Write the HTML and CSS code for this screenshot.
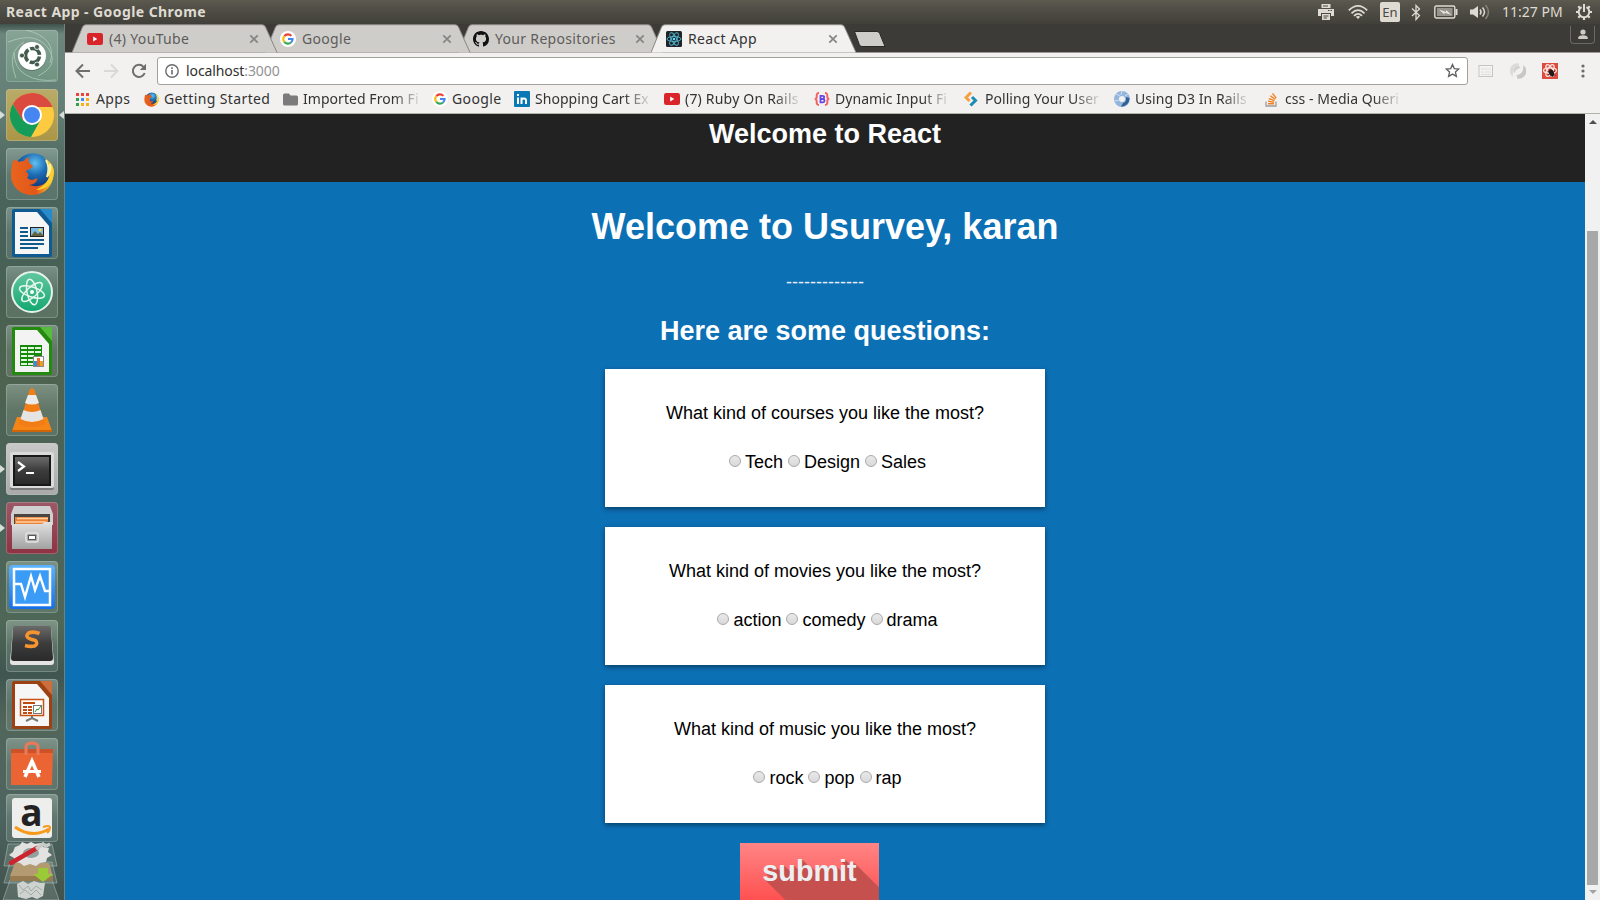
FILE: index.html
```html
<!DOCTYPE html>
<html lang="en">
<head>
<meta charset="utf-8">
<title>React App</title>
<link rel="stylesheet" href="styles.css">
</head>
<body>
<svg class="defs" width="0" height="0">
  <defs>
    <linearGradient id="gVbox" x1="0" y1="0" x2="0" y2="1"><stop offset="0" stop-color="#5ab4ff"/><stop offset="1" stop-color="#1470e8"/></linearGradient>
    <linearGradient id="gDark" x1="0" y1="0" x2="0" y2="1"><stop offset="0" stop-color="#6a6a6a"/><stop offset=".5" stop-color="#3c3c3c"/><stop offset="1" stop-color="#2a2a2a"/></linearGradient>
    <linearGradient id="gGrey" x1="0" y1="0" x2="0" y2="1"><stop offset="0" stop-color="#e2e2e2"/><stop offset="1" stop-color="#a2a2a2"/></linearGradient>
    <linearGradient id="gAtom" x1="0" y1="0" x2="0" y2="1"><stop offset="0" stop-color="#63c79f"/><stop offset="1" stop-color="#12a770"/></linearGradient>
    <radialGradient id="gFox" cx=".55" cy=".25" r=".6"><stop offset="0" stop-color="#5fc0ef"/><stop offset=".5" stop-color="#1c6db5"/><stop offset="1" stop-color="#133a7c"/></radialGradient>
    <linearGradient id="gFlame" x1="0" y1="0" x2="1" y2="0"><stop offset="0" stop-color="#e8641c"/><stop offset=".6" stop-color="#e2571a"/><stop offset="1" stop-color="#ffd62e"/></linearGradient>
    <symbol id="google" viewBox="0 0 16 16"><circle cx="8" cy="8" r="8" fill="#fff"/><g fill="none" stroke-width="2.1"><path d="M4.3 5.2A4.6 4.6 0 0 1 11.4 4.9" stroke="#ea4335"/><path d="M4.3 5.2A4.6 4.6 0 0 0 4.3 10.8" stroke="#fbbc05"/><path d="M4.3 10.8A4.6 4.6 0 0 0 11 11.5" stroke="#34a853"/><path d="M8 8h4.6A4.6 4.6 0 0 1 11 11.5" stroke="#4285f4"/></g></symbol>
    <symbol id="youtube" viewBox="0 0 16 16"><rect y="2" width="16" height="12" rx="2.2" fill="#d9252a"/><path d="M6.2 5.6v4.8L10.3 8z" fill="#fff"/></symbol>
    <symbol id="firefox" viewBox="0 0 44 44"><circle cx="23" cy="21" r="19.500" fill="url(#gFox)"/><path d="M3 9C5 7 7 8 9 10q2-1 5-1c2-3 4-4 5-4-1 4 0 6 4 9 0 3-7 3-7 6 3 1 3 4 1 6 4 3 7 2 10 0 1 4-4 7-8 7 9 3 19 0 20-9 1-6 0-11-3-15 6 5 8 12 7 17-2 11-11 17-21 17C10 43 1 34 1 23 1 17 2 13 3 9z" fill="url(#gFlame)"/><path d="M33 5c8 6 9 14 6 21-3 6-7 9-13 12 11 0 18-8 18-18 0-6-4-11-11-15z" fill="#ffcf2b"/><path d="M36 8c3 5 3 11 1 17 3-4 4-9 3-13" stroke="#fff29c" fill="none" stroke-width="2"/></symbol>
    <symbol id="cross" viewBox="0 0 10 10"><path d="M1.300 1.300l7.400 7.400M8.700 1.300L1.300 8.700" stroke="#858585" stroke-width="1.700"/></symbol>
    <symbol id="tabShape" viewBox="0 0 206 29"><path d="M0 28.500L10.500 3Q11.500 .7 14 .7H190Q192.500 .7 193.500 3L205 28.500" fill="currentColor" stroke="#8a8781" stroke-width="1"/></symbol>
  </defs>
</svg>

<header class="panel">
  <span class="panel-title">React App - Google Chrome</span>
  <div class="indicators">
    <svg class="i-print" width="16" height="16" viewBox="0 0 16 16"><path d="M3.500 0h9v4h-9zM0 5h16v7h-3V9H3v3H0z" fill="#dfdbd2"/><path d="M4 10h8v6H4z" fill="#dfdbd2"/><path d="M5 2h5M5.500 12h5M5.500 14h3.500" stroke="#4b4943"/><path d="M10 6.500h4" stroke="#4b4943" stroke-dasharray="1.500 1"/></svg>
    <svg class="i-wifi" width="20" height="16" viewBox="0 0 20 16"><g fill="none" stroke="#dfdbd2" stroke-width="1.800"><path d="M.8 6.300Q10-2.500 19.200 6.300"/><path d="M3.500 9.300Q10 3 16.500 9.300"/><path d="M6 11.800Q10 7.800 14 11.800"/></g><path d="M7.800 12.800Q10 11 12.200 12.800L10 15z" fill="#dfdbd2"/></svg>
    <span class="lang">En</span>
    <svg class="i-bt" width="10" height="17" viewBox="0 0 10 17"><path d="M1 4.500l7.500 7L5 15.500V1.500l3.500 3.500L1 12" fill="none" stroke="#dfdbd2" stroke-width="1.300"/></svg>
    <svg class="i-bat" width="24" height="14" viewBox="0 0 24 14"><rect x=".8" y="1" width="20" height="12" rx="1.500" fill="none" stroke="#dfdbd2" stroke-width="1.400"/><rect x="3" y="3" width="15.500" height="8" fill="#96938c"/><path d="M22.500 4v6" stroke="#dfdbd2" stroke-width="2"/><path d="M5 4.500l7 2.500V5l5.500 5-7-2.500v2z" fill="#eeeae0"/></svg>
    <svg class="i-vol" width="20" height="16" viewBox="0 0 20 16"><path d="M0 5.500h3L8 2v12L3 10.500H0z" fill="#dfdbd2"/><g fill="none" stroke="#dfdbd2" stroke-width="1.500"><path d="M10 5.500q2 2.500 0 5"/><path d="M12.500 3.500q4 4.500 0 9"/><path d="M15.500 1q6 7 0 14" stroke="#85827a"/></g></svg>
    <span class="clock">11:27 PM</span>
    <svg class="i-gear" width="16" height="16" viewBox="0 0 16 16"><path d="M5.600 3.200A5.300 5.300 0 1 0 10.400 3.200" fill="none" stroke="#dfdbd2" stroke-width="2"/><path d="M8 0v8" stroke="#dfdbd2" stroke-width="2"/><path d="M0 8h2.500M13.500 8H16M8 13.500V16M2.300 2.300l1.900 1.900M13.700 2.300l-1.900 1.900M2.300 13.700l1.900-1.900M13.700 13.700l-1.900-1.900" stroke="#dfdbd2" stroke-width="2.200"/></svg>
  </div>
</header>

<div class="desktop">
  <nav class="launcher">
    <div class="tile ubuntu"><svg viewBox="0 0 52 52"><g fill="none" stroke="#c5d8cc" stroke-width="1" opacity=".6"><path d="M2 12Q30 1 42 18T32 46M50 50Q32 52 20 45T8 22"/><path d="M20 0Q52 8 44 33M10 48Q0 22 18 12"/></g><circle cx="26" cy="27" r="14" fill="#40564a" opacity=".5"/><circle cx="26" cy="26" r="14" fill="#fff"/><circle cx="26.500" cy="25.500" r="7" fill="none" stroke="#425b4c" stroke-width="3.600" stroke-dasharray="12.700 2" stroke-dashoffset="-1"/><g fill="#425b4c" stroke="#fff" stroke-width=".8"><circle cx="16" cy="25.500" r="2.500"/><circle cx="31" cy="17" r="2.500"/><circle cx="31" cy="34.500" r="2.500"/></g></svg></div>
    <div class="tile chrome running active"><svg viewBox="0 0 52 52"><circle cx="26" cy="26" r="22" fill="#fdca40"/><path d="M6.900 15A22 22 0 0 1 46.500 18H26L16.500 31.500z" fill="#db4a3e"/><path d="M6.900 15A22 22 0 0 0 25 48L34.500 31Q26 38 16.500 31z" fill="#149c58"/><circle cx="26" cy="26" r="10" fill="#fff"/><circle cx="26" cy="26" r="8" fill="#4586f2"/></svg></div>
    <div class="tile"><svg viewBox="0 0 52 52"><use href="#firefox" x="4" y="4" width="44" height="44"/></svg></div>
    <div class="tile"><svg viewBox="0 0 52 52"><rect x="6" y="2" width="40" height="48" rx="2" fill="#0e5a91"/><path d="M34 2h12v14z" fill="#2889cc"/><path d="M9 5h22l12 14v28H9z" fill="#f6f6f6"/><path d="M14 21h8M14 25h8M14 29h8M14 33h24M14 37h24M14 41h18" stroke="#12598c" stroke-width="2"/><rect x="24.500" y="20.500" width="13" height="9" fill="#79bde8" stroke="#222"/><path d="M25 29l4-5 3 3 2-2 4 4z" fill="#64643c"/><circle cx="34" cy="23" r="1.500" fill="#ffd943"/></svg></div>
    <div class="tile"><svg viewBox="0 0 52 52"><circle cx="26" cy="26" r="20" fill="url(#gAtom)" stroke="#e6f2ec" stroke-width="2"/><g fill="none" stroke="#e8f8f0" stroke-width="1.500"><ellipse cx="26" cy="26" rx="13" ry="5" transform="rotate(18 26 26)"/><ellipse cx="26" cy="26" rx="13" ry="5" transform="rotate(78 26 26)"/><ellipse cx="26" cy="26" rx="13" ry="5" transform="rotate(138 26 26)"/></g><circle cx="26" cy="26" r="2" fill="#fff"/></svg></div>
    <div class="tile"><svg viewBox="0 0 52 52"><rect x="6" y="2" width="40" height="48" rx="2" fill="#23890f"/><path d="M34 2h12v14z" fill="#55bc3c"/><path d="M9 5h22l12 14v28H9z" fill="#f3f3f3"/><rect x="14" y="20" width="22" height="21" fill="#16890b"/><path d="M15 22h6v2h-6zM22 22h6v2h-6zM29 22h6v2h-6zM15 26h6v2h-6zM22 26h6v2h-6zM29 26h6v2h-6zM15 30h6v2h-6zM22 30h6v2h-6zM15 34h6v2h-6zM22 34h5v2h-5zM15 38h6v2h-6zM22 38h5v2h-5z" fill="#e4f7e1"/><rect x="27.500" y="31.500" width="10" height="10" fill="#fff" stroke="#888"/><path d="M28 36h3v5h-3z" fill="#2c91d8"/><path d="M31 33h3v8h-3z" fill="#f06a22"/><path d="M34 36h3v5h-3z" fill="#e9a11b"/></svg></div>
    <div class="tile"><svg viewBox="0 0 52 52"><path d="M11 33h30l5 14H6z" fill="#f58616"/><path d="M6 46h40v2H6z" fill="#ce6509"/><path d="M15 35L23.500 6q2.500-4 5 0L37 35q4 4 0 6-11 4-22 0-4-2 0-6z" fill="#f27d16"/><path d="M22 11h8l3 8q-7 3-14 0z" fill="#ecebea"/><path d="M17.500 26q8.500 4 17 0l3 9q-11.500 6-23 0z" fill="#e6e4e3"/></svg></div>
    <div class="tile light running"><svg viewBox="0 0 52 52"><rect x="4" y="10" width="44" height="37" rx="2" fill="#7b7b7b"/><rect x="4" y="9" width="44" height="36" rx="2" fill="#dadada"/><rect x="7" y="12" width="38" height="31" fill="#181818"/><rect x="9" y="14" width="34" height="27" fill="url(#gDark)"/><path d="M12 19l6 4.500-6 4.500" fill="none" stroke="#fff" stroke-width="2.200"/><path d="M20 30h8" stroke="#fff" stroke-width="2"/></svg></div>
    <div class="tile red running"><svg viewBox="0 0 52 52"><path d="M8 4h36l3 8v11H5V12z" fill="#cfcfcf"/><path d="M8 12h36v11H8z" fill="#4b4541"/><path d="M9 15h33v8H9z" fill="#ec8238"/><path d="M11 16.500h31M10 20h30" stroke="#ffcf9e" stroke-width="1.500"/><path d="M6 22h30l3-2h7v27H6z" fill="url(#gGrey)"/><rect x="20" y="31" width="12" height="9" rx="2" fill="#aaa" stroke="#e5e5e5" stroke-width="1.500"/><rect x="22.500" y="33.500" width="7" height="4" fill="#fff" stroke="#555"/></svg></div>
    <div class="tile"><svg viewBox="0 0 52 52"><rect x="3" y="4" width="46" height="44" rx="4" fill="url(#gVbox)"/><rect x="8" y="8" width="36" height="36" fill="#3b9cf8" stroke="#fff" stroke-width="2.500"/><path d="M9 23h6l4 13 6-21 4 14 5-14 5 15h4" fill="none" stroke="#fff" stroke-width="2.400"/></svg></div>
    <div class="tile"><svg viewBox="0 0 52 52"><path d="M7 8L4 42q0 3 3 3h38q3 0 3-3L45 8z" fill="#e3e3e3"/><path d="M9 6h34q2 0 2 3l2 29q0 3-3 3H8q-3 0-3-3L7 9q0-3 2-3z" fill="url(#gDark)"/><path d="M33.500 13.500q-6-2.500-11-.5-4 4 2 6l5 1.500q3 3-1 5.500-4 1-9.500-.5" fill="none" stroke="#f69430" stroke-width="3.600"/></svg></div>
    <div class="tile"><svg viewBox="0 0 52 52"><rect x="6" y="2" width="40" height="48" rx="2" fill="#9c4113"/><path d="M34 2h12v14z" fill="#cc6d3b"/><path d="M9 5h22l12 14v28H9z" fill="#f6f6f6"/><rect x="14.500" y="20.500" width="23" height="16" fill="#fff" stroke="#c75115" stroke-width="1.500"/><path d="M17 24h12M17 28h4M22 28h4M17 31h4M22 31h4M17 34h4M22 34h4" stroke="#bd4b12" stroke-width="2"/><rect x="27.500" y="26.500" width="8" height="8" fill="#fff" stroke="#777"/><path d="M29 33l2-3 1 1 3-4" stroke="#2a9b29" fill="none"/><path d="M26 37v3M20 42l6-3 6 3" stroke="#777" stroke-width="2" fill="none"/></svg></div>
    <div class="tile"><svg viewBox="0 0 52 52"><path d="M5 11h42l-1 36H5z" fill="#eb6434"/><path d="M5 11h42v4H5z" fill="#cc522a"/><path d="M20 17V9q0-4 6-4t6 4v8" fill="none" stroke="#e87a5a" stroke-width="3"/><g fill="none" stroke="#fff" stroke-width="3.500"><path d="M19 39l7-16 7 16"/><path d="M17 33.500h18" stroke-width="3"/></g></svg></div>
    <div class="tile amazon"><svg viewBox="0 0 52 48"><rect x="6" y="4" width="40" height="40" rx="3" fill="#eeeeec"/></svg><span class="amazon-a">a</span><svg class="smile" viewBox="0 0 52 48"><path d="M9 33q17 12 34 2" fill="none" stroke="#f79a1c" stroke-width="3"/><path d="M37 33q6-2 7 0 0 4-3 6" fill="none" stroke="#f79a1c" stroke-width="2"/></svg></div>
    <svg class="stack" width="65" height="58" viewBox="0 0 65 58"><g fill="#b9ccc5" fill-opacity=".2" stroke="#c4d2cc" stroke-opacity=".45"><path d="M9 2h44l5 22H5z"/><path d="M11 20h42l5 21H5z"/><path d="M11 38h42l7 20H4z"/></g><path d="M16 21h34l4 13H11z" fill="#b39a71"/><path d="M11 34h43v5H11z" fill="#987a51"/><path d="M16 5l5-2 2-3 5 2 4-2 4 2 6-1 2 4 6 1-1 4 4 3-5 3-1 4-6 1-4 3-6-2-6 2-4-3-6-1v-4l-5-3 4-3z" fill="#e2e2e0"/><ellipse cx="32" cy="11" rx="8" ry="5" fill="#91a09b"/><path d="M12 21L38 6" stroke="#cc2530" stroke-width="4.500" stroke-linecap="round"/><path d="M37 7l7-5 3 2 4-2" stroke="#c9cbca" stroke-width="3.500" fill="none"/><path d="M39 26h10v6h5L44 40l-10-8h5z" fill="#9acb37"/><path d="M18 42l6-3 5 3 6-3 6 2h5l-2 13-6 3-5-2-6 2-8-2z" fill="#cfd3d0"/><path d="M20 43l4 5 5-4 3 5 5-5 6 4M21 52l5-4 6 5 5-5 5 5" stroke="#a3aba8" fill="none"/></svg>
  </nav>

  <main class="browser">
    <div class="tabs">
      <div class="tab"><svg class="tab-bg"><use href="#tabShape"/></svg><svg class="fav"><use href="#youtube"/></svg><span class="tab-text">(4) YouTube</span><svg class="close"><use href="#cross"/></svg></div>
      <div class="tab"><svg class="tab-bg"><use href="#tabShape"/></svg><svg class="fav"><use href="#google"/></svg><span class="tab-text">Google</span><svg class="close"><use href="#cross"/></svg></div>
      <div class="tab"><svg class="tab-bg"><use href="#tabShape"/></svg><svg class="fav" viewBox="0 0 16 16"><path d="M8 0C3.580 0 0 3.580 0 8c0 3.540 2.290 6.530 5.470 7.590.4.070.55-.17.55-.38 0-.19-.01-.82-.01-1.490-2.010.37-2.530-.49-2.690-.94-.09-.23-.48-.94-.82-1.130-.28-.15-.68-.52-.01-.53.63-.01 1.080.58 1.230.82.72 1.210 1.870.87 2.330.66.07-.52.28-.87.51-1.070-1.780-.2-3.640-.89-3.640-3.950 0-.87.31-1.590.82-2.150-.08-.2-.36-1.020.08-2.120 0 0 .67-.21 2.200.82.64-.18 1.320-.27 2-.27s1.360.09 2 .27c1.530-1.040 2.200-.82 2.200-.82.44 1.100.16 1.920.08 2.120.51.56.82 1.270.82 2.150 0 3.070-1.870 3.750-3.650 3.950.29.25.54.73.54 1.480 0 1.070-.01 1.930-.01 2.200 0 .21.15.46.55.38A8.010 8.010 0 0 0 16 8c0-4.420-3.580-8-8-8z" fill="#111"/></svg><span class="tab-text">Your Repositories</span><svg class="close"><use href="#cross"/></svg></div>
      <div class="tab current"><svg class="tab-bg"><use href="#tabShape"/></svg><svg class="fav" viewBox="0 0 16 16"><rect width="16" height="16" rx="1.500" fill="#202428"/><g fill="none" stroke="#4fb6d0" stroke-width=".9"><ellipse cx="8" cy="8" rx="7" ry="2.600"/><ellipse cx="8" cy="8" rx="7" ry="2.600" transform="rotate(60 8 8)"/><ellipse cx="8" cy="8" rx="7" ry="2.600" transform="rotate(120 8 8)"/></g><circle cx="8" cy="8" r="1.300" fill="#61dafb"/></svg><span class="tab-text">React App</span><svg class="close"><use href="#cross"/></svg></div>
      <svg class="newtab" width="34" height="17" viewBox="0 0 34 17"><path d="M2.500.5H25q2 0 2.700 2L33 15.500H10q-2 0-2.700-2z" fill="#cfcdca" stroke="#2b2925"/></svg>
      <div class="profile"><svg width="10" height="11" viewBox="0 0 10 11"><circle cx="5" cy="3" r="2.600" fill="#cfccc5"/><path d="M.3 10V8.300Q1 6.300 5 6.300t4.700 2V10z" fill="#cfccc5"/></svg></div>
    </div>

    <div class="toolbar">
      <svg class="nav-back" width="16" height="16" viewBox="0 0 16 16"><path d="M15 8H2M8 1.500L1.500 8 8 14.500" fill="none" stroke="#6e6e6e" stroke-width="2"/></svg>
      <svg class="nav-fwd" width="16" height="16" viewBox="0 0 16 16"><path d="M1 8h13M8 1.500L14.500 8 8 14.500" fill="none" stroke="#d9d8d6" stroke-width="2"/></svg>
      <svg class="nav-reload" width="16" height="16" viewBox="0 0 16 16"><path d="M13.700 10A6.100 6.100 0 1 1 12.500 3.800" fill="none" stroke="#6e6e6e" stroke-width="2"/><path d="M15 .8V7H8.800z" fill="#6e6e6e"/></svg>
      <div class="address">
        <svg width="14" height="14" viewBox="0 0 14 14"><circle cx="7" cy="7" r="6.200" fill="none" stroke="#6b6b6b" stroke-width="1.400"/><path d="M7 6v4.500M7 3.300v1.700" stroke="#6b6b6b" stroke-width="1.600"/></svg>
        <span class="url">localhost<span class="port">:3000</span></span>
        <svg class="star" width="15" height="15" viewBox="0 0 15 15"><path d="M7.500 1.500l1.800 4.100 4.500.4-3.400 3 1 4.400-3.900-2.300-3.900 2.300 1-4.400-3.400-3 4.500-.4z" fill="none" stroke="#5f5f5f" stroke-width="1.300"/></svg>
      </div>
      <svg class="ext1" width="16" height="14" viewBox="0 0 16 14"><rect x="1" y="1.500" width="13.500" height="11" fill="#f4f3f2" stroke="#c6c5c3"/><path d="M3 5h10M3 8h3M7 8h6M3 10.500h10" stroke="#dfdedc"/></svg>
      <svg class="ext2" width="16" height="16" viewBox="0 0 16 16"><path d="M9 .5A7.500 7.500 0 0 0 3 14Q1.500 5 10 3.500q-2-1-1-3z" fill="#dcdbda"/><path d="M8 3.500a4.500 4.500 0 0 0-3.500 7Q5 6 11 4.500z" fill="#cfcecd"/><path d="M7 15.500A7.500 7.500 0 0 0 13 2q1.500 9-7 10.500 2 1 1 3z" fill="#c8c7c6"/></svg>
      <svg class="ext3" width="16" height="16" viewBox="0 0 16 16"><rect width="16" height="16" fill="#dc4b3e"/><g fill="none" stroke="#fbe3df" stroke-width="1.200"><ellipse cx="8" cy="7.500" rx="6.500" ry="2.700"/><ellipse cx="8" cy="7.500" rx="6.500" ry="2.700" transform="rotate(60 8 7.500)"/><ellipse cx="8" cy="7.500" rx="6.500" ry="2.700" transform="rotate(120 8 7.500)"/></g><ellipse cx="9.500" cy="10" rx="2.500" ry="3.500" transform="rotate(-25 9.500 10)" fill="#241816"/><path d="M5.500 8.500l8 4M6 12l7-4M8 6l3 8" stroke="#241816" stroke-width=".8"/></svg>
      <svg class="menu" width="4" height="14" viewBox="0 0 4 14"><g fill="#6b6b6b"><circle cx="2" cy="2" r="1.600"/><circle cx="2" cy="7" r="1.600"/><circle cx="2" cy="12" r="1.600"/></g></svg>
    </div>

    <div class="bookmarks">
      <div class="bm b-apps"><svg width="13" height="13" viewBox="0 0 13 13"><path d="M0 0h3v3H0zM5 0h3v3H5zM10 0h3v3h-3z" fill="#e8453c"/><path d="M0 5h3v3H0zM0 10h3v3H0z" fill="#2f9e4f"/><path d="M5 5h3v3H5z" fill="#4688f1"/><path d="M10 5h3v3h-3zM5 10h3v3H5zM10 10h3v3h-3z" fill="#f6b01b"/></svg><span>Apps</span></div>
      <div class="bm b-ff"><svg width="15" height="15" viewBox="0 0 44 44"><use href="#firefox" width="44" height="44"/></svg><span>Getting Started</span></div>
      <div class="bm b-imp"><svg width="15" height="13" viewBox="0 0 15 13"><path d="M0 2Q0 .5 1.500.5H6L7.500 2.500H13.500Q15 2.500 15 4v7q0 1.500-1.500 1.500h-12Q0 12.500 0 11z" fill="#7b7b7b"/></svg><span class="fade">Imported From Fi</span></div>
      <div class="bm b-goo"><svg width="16" height="16"><use href="#google"/></svg><span>Google</span></div>
      <div class="bm b-li"><svg width="16" height="16" viewBox="0 0 16 16"><rect width="16" height="16" rx="1" fill="#0a78b5"/><path d="M4 6.500V13M4 3v2M7.500 13V6.500M7.500 9.500Q7.500 7.400 9.800 7.400T12 9.500V13" stroke="#fff" stroke-width="2" fill="none"/></svg><span class="fade">Shopping Cart Ex</span></div>
      <div class="bm b-yt"><svg width="16" height="16"><use href="#youtube"/></svg><span class="fade">(7) Ruby On Rails</span></div>
      <div class="bm b-dyn"><svg width="16" height="16" viewBox="0 0 16 16"><path d="M5 2Q2.500 2 2.700 5T.7 8Q2.900 8 2.700 11T5 14M11 2q2.500 0 2.300 3t2 3q-2.200 0-2 3T11 14" fill="none" stroke="#f2635f" stroke-width="2"/><path d="M6.500 4.800h2q1.700 0 1.700 1.500T8.500 8h-2zM6.500 8h2.300q1.800.2 1.800 1.700t-1.800 1.600H6.500z" fill="none" stroke="#6547e8" stroke-width="1.800"/></svg><span class="fade">Dynamic Input Fi</span></div>
      <div class="bm b-poll"><svg width="14" height="16" viewBox="0 0 14 16"><path d="M7 1.500L2 6.500 5.500 10" fill="none" stroke="#f59f3f" stroke-width="3"/><path d="M8 6l3.500 3.500L6.500 14.500" fill="none" stroke="#1d8cb4" stroke-width="3"/></svg><span class="fade">Polling Your User</span></div>
      <div class="bm b-d3"><svg width="16" height="16" viewBox="0 0 16 16"><circle cx="8" cy="8" r="5.500" fill="none" stroke="#93b6dc" stroke-width="5"/><path d="M15.500 7Q15 15 7 15.800L9 12Q13 11 12 6z" fill="#2f5f97"/><path d="M2 3l4 2M1 10l4-1M8 0L7 4M14 3l-3 2" stroke="#dce8f4" stroke-width=".8"/></svg><span class="fade">Using D3 In Rails</span></div>
      <div class="bm b-css"><svg width="13" height="15" viewBox="0 0 13 15"><path d="M1 9.500V14h10V9.500" fill="none" stroke="#9b9ca0" stroke-width="1.300"/><path d="M3 11.700h6M3.100 9.300l6 .9M3.800 6.600l5.700 2M5.300 3.800l5 3.500M7.500 1.300l3.700 4.900" stroke="#f08125" stroke-width="1.400"/></svg><span class="fade">css - Media Queri</span></div>
    </div>

    <div class="viewport">
      <div class="page">
        <div class="app-header"><h2>Welcome to React</h2></div>
        <div class="survey">
          <h1>Welcome to Usurvey, karan</h1>
          <p class="rule">-------------</p>
          <h2>Here are some questions:</h2>
          <form class="questions">
            <section class="card"><p>What kind of courses you like the most?</p><div class="answers"><label><i class="radio"></i>Tech</label><label><i class="radio"></i>Design</label><label><i class="radio"></i>Sales</label></div></section>
            <section class="card"><p>What kind of movies you like the most?</p><div class="answers"><label><i class="radio"></i>action</label><label><i class="radio"></i>comedy</label><label><i class="radio"></i>drama</label></div></section>
            <section class="card"><p>What kind of music you like the most?</p><div class="answers"><label><i class="radio"></i>rock</label><label><i class="radio"></i>pop</label><label><i class="radio"></i>rap</label></div></section>
            <button class="submit" type="button">submit</button>
          </form>
        </div>
      </div>
      <div class="scrollbar"><i class="arrow up"></i><div class="thumb"></div><i class="arrow down"></i></div>
    </div>
  </main>
</div>
</body>
</html>
```

FILE: styles.css
```css
* { box-sizing: border-box; }
body { margin: 0; width: 1600px; height: 900px; overflow: hidden; font-family: "Noto Sans", "Open Sans", sans-serif; display: flex; flex-direction: column; }
svg { display: block; flex: none; }
.defs { position: absolute; }

.panel { height: 24px; flex: none; display: flex; align-items: center; justify-content: space-between; padding: 0 8px 0 6px; background: linear-gradient(#5d5a50, #55534a 20%, #403f39); color: #dfdbd2; white-space: nowrap; }
.panel-title { font-size: 14px; font-weight: 700; line-height: 24px; letter-spacing: .42px; }
.indicators { display: flex; align-items: center; }
.i-wifi { margin-left: 14px; }
.lang { margin-left: 12px; width: 20px; height: 20px; border-radius: 2px; background: #dfdbd2; color: #4a4842; font-size: 13px; line-height: 20px; text-align: center; }
.i-bt { margin-left: 11px; }
.i-bat { margin-left: 13px; }
.i-vol { margin-left: 12px; }
.clock { margin-left: 12px; width: 61px; font-size: 14px; line-height: 24px; letter-spacing: 0; }
.i-gear { margin-left: 13px; }

.desktop { flex: 1; display: flex; min-height: 0; }
.launcher { width: 65px; flex: none; display: flex; flex-direction: column; align-items: center; gap: 7px; padding-top: 6px; padding-right: 1px; border-right: 1px solid #6e847c; overflow: hidden; background: linear-gradient(#3f524b 0, #6c867d 10px, #647f76 80px, #4b655c 160px, #476159 220px, #4a6151 290px, #4e6350 360px, #4a625b 470px, #4f6757 600px, #3f5550 650px, #52665b 700px, #4d645f 790px, #42524d 876px); }
.tile { position: relative; width: 52px; height: 52px; flex: none; border-radius: 4px; background: linear-gradient(rgba(195,215,205,.4), rgba(180,200,190,.18) 50%, rgba(180,200,190,.16)); box-shadow: inset 0 0 0 1px rgba(200,215,205,.3); }
.tile svg { width: 52px; height: 52px; }
.tile.ubuntu { background: linear-gradient(#87a395, #6f9381); }
.tile.chrome { background: linear-gradient(#b9ac69, #ab9647); }
.tile.light { background: linear-gradient(#c8c8c8, #a9a9a9); }
.tile.red { background: linear-gradient(#9b5866, #8e3243); }
.tile.amazon { height: 48px; margin-top: -3px; }
.tile.amazon svg { height: 48px; }
.tile .smile { position: absolute; left: 0; top: 0; }
.amazon-a { position: absolute; left: 0; top: -1px; width: 52px; text-align: center; font: 700 37px/38px "Open Sans", sans-serif; color: #222; }
.running::before { content: ""; position: absolute; left: -6px; top: 22px; border: 4px solid transparent; border-left: 5px solid #d8dfdb; border-right: 0; }
.active::after { content: ""; position: absolute; right: -6px; top: 22px; border: 4px solid transparent; border-right: 5px solid #d8dfdb; border-left: 0; }
.stack { margin-top: -7px; }

.browser { flex: 1; min-width: 0; display: flex; flex-direction: column; background: #f2f1f0; }
.tabs { height: 29px; flex: none; display: flex; background: #3c3b37; padding-left: 7px; border-bottom: 1px solid #9c9994; }
.tab { position: relative; width: 193px; height: 29px; flex: none; display: flex; align-items: center; padding-left: 15px; color: #cfcdca; }
.tab:nth-child(1) { z-index: 3; }
.tab:nth-child(2) { z-index: 2; }
.tab:nth-child(3) { z-index: 1; }
.tab-bg { position: absolute; left: 0; top: 0; width: 206px; height: 29px; }
.fav { position: relative; width: 16px; height: 16px; margin-top: 1px; }
.tab-text { position: relative; margin-left: 6px; width: 140px; font-size: 14px; line-height: 20px; letter-spacing: .32px; color: #5e5c5a; white-space: nowrap; }
.close { position: relative; width: 10px; height: 10px; margin-top: 1px; }
.tab.current { color: #f2f1f0; z-index: 4; }
.tab.current .tab-text { color: #333; }
.newtab { margin: 7px 0 0 8px; }
.profile { width: 25px; height: 18px; margin: 2px 5px 0 auto; border: 1px solid #6b6963; border-top: 0; border-radius: 0 0 4px 4px; display: flex; justify-content: center; padding-top: 3px; }

.toolbar { height: 35px; flex: none; display: flex; align-items: center; padding: 0 15px 0 10px; }
.nav-fwd { margin-left: 12px; }
.nav-reload { margin-left: 12px; }
.address { width: 1311px; height: 28px; margin-left: 10px; border: 1px solid #a3a19e; border-radius: 3px; background: #fff; display: flex; align-items: center; padding: 0 7px; }
.url { margin-left: 7px; font-size: 14px; line-height: 20px; color: #303030; letter-spacing: -.1px; }
.port { color: #939393; }
.star { margin-left: auto; }
.ext1 { margin-left: 10px; }
.ext2 { margin-left: 16px; }
.ext3 { margin-left: 16px; }
.menu { margin-left: auto; }

.bookmarks { height: 26px; flex: none; display: flex; padding-left: 11px; border-bottom: 1px solid #b4b2af; font-size: 14px; color: #333; }
.bm { flex: none; height: 22px; display: flex; align-items: center; white-space: nowrap; letter-spacing: .15px; }
.bm span { margin-left: 5px; line-height: 20px; }
.fade { letter-spacing: .05px; -webkit-mask-image: linear-gradient(90deg, #000 78%, rgba(0,0,0,.12)); mask-image: linear-gradient(90deg, #000 78%, rgba(0,0,0,.12)); }
.b-apps { width: 68px; letter-spacing: .4px; }
.b-apps span { margin-left: 7px; }
.b-ff { width: 139px; letter-spacing: .38px; }
.b-imp { width: 149px; }
.b-goo { width: 82px; letter-spacing: .4px; }
.b-goo span { margin-left: 4px; }
.b-li, .b-yt, .b-dyn { width: 150px; }
.b-yt .fade { letter-spacing: .2px; }
.b-poll { width: 150px; }
.b-poll span { margin-left: 7px; }
.b-d3 { width: 151px; }
.b-css span { margin-left: 7px; }

.viewport { flex: 1; min-height: 0; display: flex; }
.page { flex: 1; height: 786px; overflow: hidden; background: #0c70b5; font-family: "Liberation Sans", Arial, sans-serif; font-size: 18px; text-align: center; color: #fff; }
.app-header { height: 68px; background: #222; padding-top: 5px; }
h1, h2, p { margin: 0; }
h1 { font-size: 36px; line-height: 41px; }
h2 { font-size: 27px; line-height: 31px; }
.survey { padding-top: 24px; }
.rule { margin-top: 25px; line-height: 20px; color: #e6eef4; }
.survey h2 { margin-top: 24px; }
.questions { margin-top: 22px; display: flex; flex-direction: column; align-items: center; gap: 20px; }
.card { width: 440px; height: 138px; padding-top: 34px; background: #fff; color: #000; box-shadow: 0 2px 5px rgba(0,0,0,.45); line-height: 21px; }
.answers { display: flex; justify-content: center; margin-top: 28px; }
.answers label { display: flex; }
.radio { width: 12px; height: 12px; margin: 3px 4px 0 5px; border: 1px solid #a9a9a9; border-radius: 50%; background: linear-gradient(#e9e9e9, #d9d9d9); }
.submit { width: 139px; height: 72px; flex: none; margin-right: 31px; border: 0; padding: 0 0 16px; overflow: hidden; background: linear-gradient(#ff8585, #ff4c4c 62px); font: 700 28.8px/34px "Liberation Sans", Arial, sans-serif; color: #eceff1;
  text-shadow: 1px 1px #c5504d, 2px 2px #c5504d, 3px 3px #c5504d, 4px 4px #c5504d, 5px 5px #c5504d, 6px 6px #c5504d, 7px 7px #c5504d, 8px 8px #c5504d, 9px 9px #c5504d, 10px 10px #c5504d, 11px 11px #c5504d, 12px 12px #c5504d, 13px 13px #c5504d, 14px 14px #c5504d, 15px 15px #c5504d, 16px 16px #c5504d, 17px 17px #c5504d, 18px 18px #c5504d, 19px 19px #c5504d, 20px 20px #c5504d, 21px 21px #c5504d, 22px 22px #c5504d, 23px 23px #c5504d, 24px 24px #c5504d, 25px 25px #c5504d, 26px 26px #c5504d, 27px 27px #c5504d, 28px 28px #c5504d, 29px 29px #c5504d, 30px 30px #c5504d, 31px 31px #c5504d, 32px 32px #c5504d, 33px 33px #c5504d, 34px 34px #c5504d, 35px 35px #c5504d, 36px 36px #c5504d, 37px 37px #c5504d, 38px 38px #c5504d, 39px 39px #c5504d, 40px 40px #c5504d, 41px 41px #c5504d, 42px 42px #c5504d; }
.scrollbar { width: 15px; flex: none; background: #f1f1f1; display: flex; flex-direction: column; align-items: center; }
.thumb { width: 11px; height: 654px; margin-top: 107px; background: #a8a8a8; }
.arrow { flex: none; border: 4px solid transparent; }
.arrow.up { border-bottom-color: #505050; border-top: 0; margin-top: 6px; }
.arrow.down { border-top-color: #a3a3a3; border-bottom: 0; margin-top: 5px; }
```
